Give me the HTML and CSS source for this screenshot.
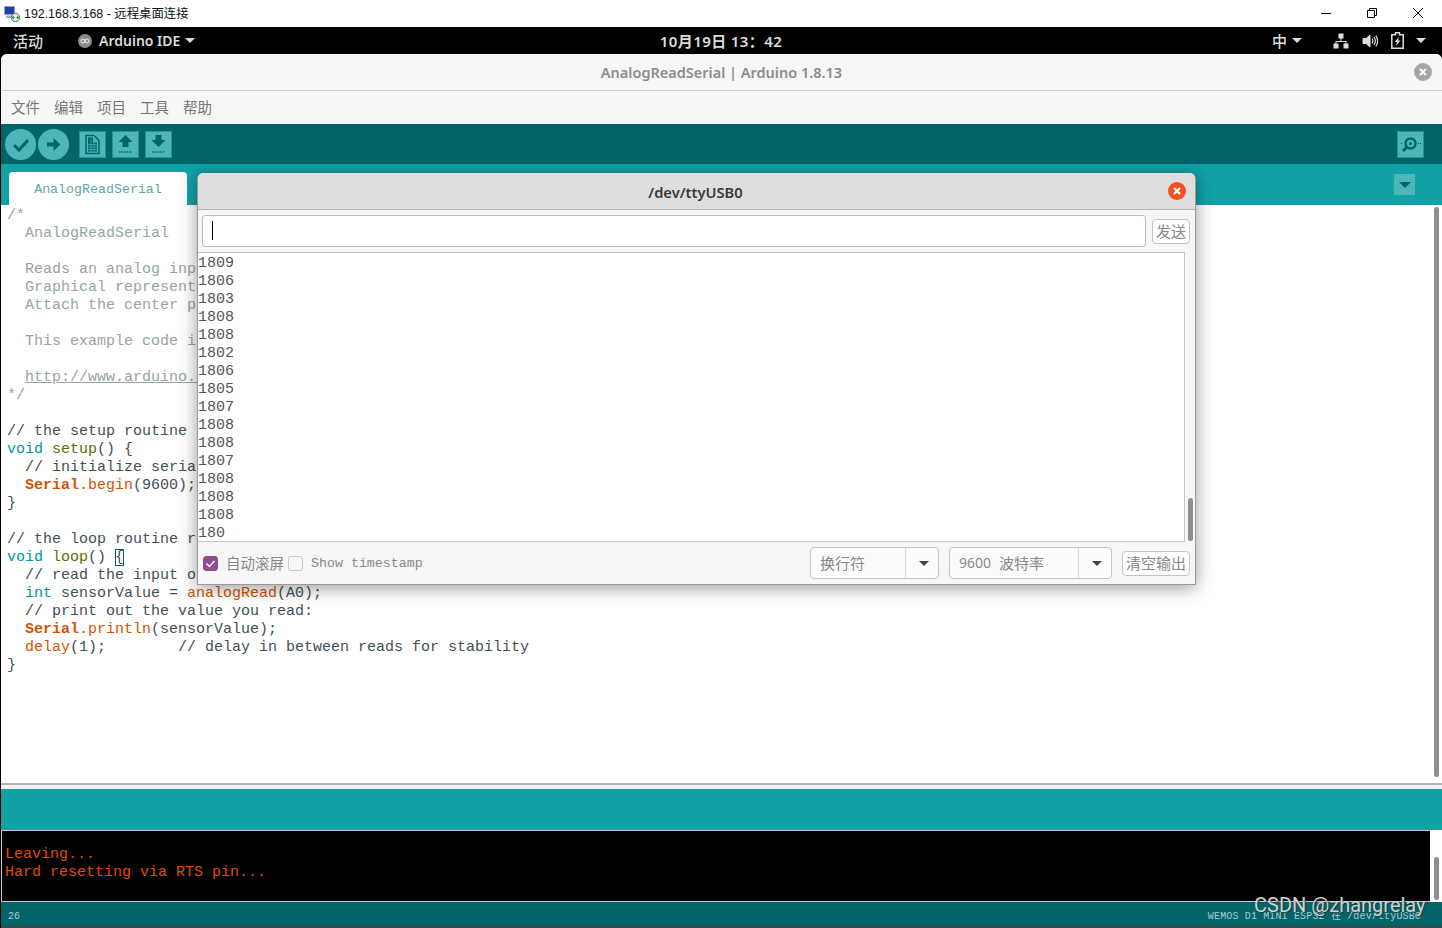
FILE: index.html
```html
<!DOCTYPE html>
<html lang="zh">
<head>
<meta charset="UTF-8">
<title>AnalogReadSerial | Arduino 1.8.13</title>
<link rel="stylesheet" href="styles.css">
</head>
<body>

<!-- windows remote desktop bar -->
<div class="rdp">
  <svg class="rdp-icon" width="16" height="16" viewBox="0 0 16 16">
    <rect x="0.500" y="0.500" width="10" height="8" fill="#1c3fb0" stroke="#9aa3b5"/>
    <rect x="2" y="9.500" width="8" height="2.500" fill="#a8aebb"/>
    <circle cx="11.500" cy="11.500" r="4.200" fill="#ececec" stroke="#666"/>
    <path d="M8.500 11.500h2M12.500 11.500h2M9.500 10l-1 1.500 1 1.500M13.500 10l1 1.500-1 1.500" stroke="#1d8a2a" fill="none"/>
  </svg>
  <span class="rdp-title">192.168.3.168 - 远程桌面连接</span>
  <div class="rdp-btns">
    <svg width="12" height="12" viewBox="0 0 12 12"><path d="M1 6.500h10" stroke="#000"/></svg>
    <svg width="12" height="12" viewBox="0 0 12 12"><path d="M1.500 3.500h7v7h-7zM3.500 3.500v-2h7v7h-2" stroke="#000" fill="none"/></svg>
    <svg width="12" height="12" viewBox="0 0 12 12"><path d="M1 1l10 10M11 1L1 11" stroke="#000"/></svg>
  </div>
</div>

<!-- gnome top bar -->
<div class="topbar">
  <div class="top-left">
    <span class="activities">活动</span>
    <span class="app">
      <svg width="14" height="14" viewBox="0 0 14 14"><circle cx="7" cy="7" r="7" fill="#8b8b8b"/><circle cx="5" cy="7" r="2" fill="none" stroke="#eee"/><circle cx="9" cy="7" r="2" fill="none" stroke="#eee"/></svg>
      Arduino IDE <i class="caret"></i>
    </span>
  </div>
  <div class="clock">10月19日 13：42</div>
  <div class="top-right">
    <span class="ime">中 <i class="caret"></i></span>
    <svg width="16" height="16" viewBox="0 0 16 16" fill="#ddd"><rect x="5.500" y="0.500" width="5" height="5"/><rect x="0.500" y="10.500" width="5" height="5"/><rect x="10.500" y="10.500" width="5" height="5"/><path d="M7.500 5h1v3h5v3h-1V9h-9v2h-1V8h5z"/></svg>
    <svg width="16" height="16" viewBox="0 0 16 16" fill="none" stroke="#ddd"><path d="M1 5.500h3L8 2v12L4 10.500H1z" fill="#ddd"/><path d="M10 5.500c1 1.500 1 3.500 0 5M12 4c1.700 2.500 1.700 5.500 0 8M13.800 2.500c2.300 3.500 2.300 7.500 0 11" stroke-width="1.200"/></svg>
    <svg width="13" height="17" viewBox="0 0 13 17"><path d="M4.500 0.800h4v2h3.700v13.400H.8V2.800h3.700z" fill="none" stroke="#ddd" stroke-width="1.500"/><path d="M8 5L3.500 10H6l-1 4 4.500-5.500H7z" fill="#ddd"/></svg>
    <i class="caret"></i>
  </div>
</div>

<!-- arduino window -->
<div class="ide">
  <div class="ide-title">
    <span>AnalogReadSerial | Arduino 1.8.13</span>
    <span class="win-close">
      <svg width="18" height="18" viewBox="0 0 18 18"><circle cx="9" cy="9" r="9" fill="#a5a5a5"/><path d="M6 6l6 6M12 6l-6 6" stroke="#fff" stroke-width="2.200"/></svg>
    </span>
  </div>

  <div class="menu">
    <span>文件</span><span>编辑</span><span>项目</span><span>工具</span><span>帮助</span>
  </div>

  <div class="toolbar">
    <span class="round"><svg width="31" height="31" viewBox="0 0 31 31"><path d="M9 16l5 5 9-10" fill="none" stroke="#00646a" stroke-width="3"/></svg></span>
    <span class="round"><svg width="31" height="31" viewBox="0 0 31 31"><path d="M9 13.500h6.500V9l7 6.500-7 6.500v-4.500H9z" fill="#00646a"/></svg></span>
    <span class="square first"><svg width="25" height="25" viewBox="0 0 25 25"><path d="M6 3.500h8l5 5v13H6z" fill="none" stroke="#00646a" stroke-width="1.500"/><path d="M8 5.500h5v5h4v9H8z" fill="#00646a"/><path d="M8 12.500h9M8 15h9M8 17.500h9M11 7v12M14 10v9" stroke="#4db6bb" stroke-width=".7"/></svg></span>
    <span class="square"><svg width="25" height="25" viewBox="0 0 25 25"><path d="M12.500 3l7 7h-4v5h-6v-5h-4z" fill="#00646a"/><path d="M6 20h13" stroke="#00646a" stroke-width="1.500" stroke-dasharray="1.500 1"/></svg></span>
    <span class="square"><svg width="25" height="25" viewBox="0 0 25 25"><path d="M9.500 3h6v5h4l-7 7-7-7h4z" fill="#00646a"/><path d="M6 20h13" stroke="#00646a" stroke-width="1.500" stroke-dasharray="1.500 1"/></svg></span>
    <span class="square monitor-btn"><svg width="25" height="25" viewBox="0 0 25 25"><circle cx="12.500" cy="11.500" r="5" fill="none" stroke="#00646a" stroke-width="2.500"/><circle cx="12.500" cy="11.500" r="1.500" fill="#00646a"/><path d="M9 15l-4 4" stroke="#00646a" stroke-width="3"/><path d="M3 11.500h2M20 11.500h3" stroke="#00646a" stroke-dasharray="1 1"/></svg></span>
  </div>

  <div class="tabs">
    <span class="tab">AnalogReadSerial</span>
    <span class="tab-menu"><i></i></span>
  </div>

  <div class="editor">
<pre class="code"><span class="c">/*
  AnalogReadSerial

  Reads an analog input on pin 0, prints the result to the Serial Monitor.
  Graphical representation is available using Serial Plotter.
  Attach the center pin of a potentiometer to pin A0.

  This example code is in the public domain.

  <u>http://www.arduino.cc/en/Tutorial/AnalogReadSerial</u>
*/</span>

// the setup routine runs once when you press reset:
<span class="k">void</span> <span class="f">setup</span>() {
  // initialize serial communication at 9600 bits per second:
  <span class="s">Serial</span><span class="o">.begin</span>(9600);
}

// the loop routine runs over and over again forever:
<span class="k">void</span> <span class="f">loop</span>() <span class="match">{</span>
  // read the input on analog pin 0:
  <span class="k">int</span> sensorValue = <span class="o">analogRead</span>(A0);
  // print out the value you read:
  <span class="s">Serial</span><span class="o">.println</span>(sensorValue);
  <span class="o">delay</span>(1);        // delay in between reads for stability
}</pre>
    <span class="vbar"></span>
  </div>

  <div class="divider"></div>
  <div class="notice"></div>

  <div class="console">
    <pre class="console-text">Leaving...
Hard resetting via RTS pin...</pre>
    <div class="console-side"><span></span></div>
  </div>

  <div class="status">
    <span class="lineno">26</span>
    <span class="board">WEMOS D1 MINI ESP32 在 /dev/ttyUSB0</span>
  </div>
</div>

<!-- serial monitor, floats over the ide window -->
<div class="monitor">
  <div class="mon-title">
    <span>/dev/ttyUSB0</span>
    <svg class="mon-close" width="18" height="18" viewBox="0 0 18 18"><circle cx="9" cy="9" r="9" fill="#f4511e"/><path d="M6 6l6 6M12 6l-6 6" stroke="#fff" stroke-width="2.200"/></svg>
  </div>
  <div class="mon-send">
    <div class="mon-input"><i></i></div>
    <span class="btn">发送</span>
  </div>
  <div class="mon-body">
<pre class="mon-out">1809
1806
1803
1808
1808
1802
1806
1805
1807
1808
1808
1807
1808
1808
1808
180</pre>
    <span class="mon-bar"></span>
  </div>
  <div class="mon-foot">
    <span class="check on"><svg width="15" height="15" viewBox="0 0 15 15"><path d="M3.500 7.500l3 3 5-5.500" fill="none" stroke="#fff" stroke-width="1.500"/></svg></span>
    <span class="scroll-label">自动滚屏</span>
    <span class="check"></span>
    <span class="stamp">Show timestamp</span>
    <span class="select first-sel"><span class="sel-text">换行符</span><span class="sel-arrow"><i></i></span></span>
    <span class="select baud"><span class="sel-text"><small>9600</small> 波特率</span><span class="sel-arrow"><i></i></span></span>
    <span class="btn clear">清空输出</span>
  </div>
</div>

<div class="watermark">CSDN @zhangrelay</div>

</body>
</html>
```

FILE: styles.css
```css
*{
    box-sizing: border-box;
}
html, body{
    margin: 0;
    height: 100%;
}
body{
    width: 1442px;
    height: 928px;
    overflow: hidden;
    display: flex;
    flex-direction: column;
    background: #000;
    font-family: "Noto Sans", "Noto Sans CJK SC", sans-serif;
}
pre{
    margin: 0;
}

/* remote desktop bar */
.rdp{
    height: 27px;
    flex: none;
    background: #fff;
    display: flex;
    align-items: center;
    padding-left: 4px;
    color: #111;
    font-family: "Liberation Sans", "Noto Sans CJK SC", sans-serif;
    font-size: 12.400px;
}
.rdp-icon{
    margin-right: 4px;
}
.rdp-title{
    margin-top: -1px;
}
.rdp-btns{
    margin-left: auto;
    display: flex;
    gap: 34px;
    padding-right: 18px;
    margin-top: -2px;
}

/* top bar */
.topbar{
    height: 27px;
    flex: none;
    display: grid;
    grid-template-columns: 1fr auto 1fr;
    align-items: center;
    background: #000;
    color: #ddd;
    font-size: 15px;
    font-weight: 600;
}
.top-left{
    display: flex;
    align-items: center;
    padding-left: 13px;
}
.activities{
    margin-right: 35px;
    font-weight: 500;
}
.app{
    display: flex;
    align-items: center;
    gap: 7px;
    font-size: 14px;
}
.app .caret{
    margin-left: -2px;
}
.clock{
    font-size: 15px;
    letter-spacing: 0.400px;
}
.top-right{
    display: flex;
    align-items: center;
    justify-content: flex-end;
    gap: 13px;
    padding-right: 16px;
}
.ime{
    display: flex;
    align-items: center;
    gap: 5px;
    margin-right: 18px;
    font-weight: 500;
}
.top-right > svg:nth-of-type(3){
    margin-right: -1px;
}
.caret{
    display: inline-block;
    width: 0;
    height: 0;
    border: 5px solid transparent;
    border-top-color: #ddd;
    border-bottom: 0;
}

/* ide window */
.ide{
    flex: 1;
    min-height: 0;
    display: flex;
    flex-direction: column;
    margin-left: 1px;
    background: #fff;
    border-radius: 6px 6px 0 0;
    overflow: hidden;
}
.ide-title{
    height: 37px;
    flex: none;
    position: relative;
    display: flex;
    align-items: center;
    justify-content: center;
    background: #f6f6f6;
    border-bottom: 1px solid #cfcfcf;
    color: #8c8c8c;
    font-size: 14.500px;
    font-weight: 600;
}
.win-close{
    position: absolute;
    right: 10px;
    top: 9px;
    height: 18px;
}
.menu{
    height: 33px;
    flex: none;
    display: flex;
    align-items: center;
    gap: 14px;
    padding: 0 0 2px 10px;
    background: #f6f6f6;
    color: #777;
    font-size: 14.500px;
}
.toolbar{
    height: 40px;
    flex: none;
    display: flex;
    align-items: center;
    padding-left: 4px;
    background: #00646a;
}
.round{
    width: 31px;
    height: 31px;
    margin-right: 2px;
    border-radius: 50%;
    background: #4db6bb;
}
.square{
    width: 27px;
    height: 27px;
    margin-right: 6px;
    padding: 1px;
    background: #4db6bb;
    border: 1px solid #2b9197;
}
.square svg{
    display: block;
    margin: -1px;
}
.first{
    margin-left: 8px;
}
.monitor-btn{
    margin-left: auto;
    margin-right: 18px;
}
.tabs{
    height: 41px;
    flex: none;
    display: flex;
    align-items: flex-end;
    padding-left: 8px;
    background: #12a2a6;
}
.tab{
    width: 178px;
    height: 33px;
    padding-top: 10px;
    text-align: center;
    background: #fff;
    border-radius: 4px 4px 0 0;
    color: #5fa5a7;
    font-family: "Liberation Mono", monospace;
    font-size: 13.300px;
}
.tab-menu{
    margin-left: auto;
    margin-right: 27px;
    margin-bottom: 10px;
    width: 21px;
    height: 21px;
    display: flex;
    align-items: center;
    justify-content: center;
    background: #4db6bb;
}
.tab-menu i{
    border: 6px solid transparent;
    border-top-color: #00646a;
    border-bottom: 0;
}

/* editor */
.editor{
    flex: 1;
    min-height: 0;
    position: relative;
    overflow: hidden;
    background: #fff;
}
.code, .mon-out, .console-text{
    font-family: "Liberation Mono", monospace;
    font-size: 15px;
    line-height: 18px;
}
.code{
    padding: 2px 0 0 6px;
    color: #434f54;
}
.c{ color: #95a5a6; }
.k{ color: #00979c; }
.f{ color: #5e6d03; }
.s{ color: #d35400; font-weight: bold; }
.o{ color: #d35400; }
.match{
    outline: 1px solid #006468;
    outline-offset: -1px;
}
.vbar{
    position: absolute;
    right: 3px;
    top: 2px;
    bottom: 6px;
    width: 5px;
    border-radius: 3px;
    background: #8f8f8f;
}
.divider{
    height: 6px;
    flex: none;
    background: #f1f1f1;
    border-top: 2px solid #b0b0b0;
}
.notice{
    height: 41px;
    flex: none;
    background: #12a2a6;
}
.console{
    height: 72px;
    flex: none;
    display: flex;
    background: #fff;
}
.console-text{
    flex: 1;
    padding: 15px 0 0 3px;
    background: #000;
    border: 1px solid #ccc;
    border-right: 0;
    color: #e34c00;
}
.console-side{
    width: 12px;
    padding: 27px 3px 2px 4px;
}
.console-side span{
    display: block;
    height: 43px;
    border-radius: 3px;
    background: #8f8f8f;
}
.status{
    height: 26px;
    flex: none;
    display: flex;
    align-items: center;
    justify-content: space-between;
    padding: 2px 21px 0 7px;
    background: #006468;
    color: #a9cfd0;
    font-family: "Liberation Mono", "Noto Sans CJK SC", monospace;
    font-size: 10px;
    border-bottom: 2px solid #444;
}
.lineno{
    margin-top: 2px;
}
.board{
    margin-top: -2px;
    letter-spacing: 0.150px;
}

/* serial monitor */
.monitor{
    position: absolute;
    left: 197px;
    top: 173px;
    width: 999px;
    height: 412px;
    display: flex;
    flex-direction: column;
    background: #f6f6f6;
    border: 1px solid #9a9a9a;
    border-top: 0;
    border-radius: 6px 6px 0 0;
    box-shadow: 0 3px 18px rgba(0,0,0,0.4);
}
.mon-title{
    height: 37px;
    flex: none;
    display: flex;
    align-items: center;
    justify-content: center;
    position: relative;
    padding: 2px 2px 0 0;
    background: #dedede;
    border-bottom: 1px solid #b5b5b5;
    border-radius: 6px 6px 0 0;
    color: #3a3a3a;
    font-size: 14.700px;
    font-weight: 600;
}
.mon-close{
    position: absolute;
    right: 9px;
    top: 9px;
}
.mon-send{
    height: 42px;
    flex: none;
    display: flex;
    align-items: center;
    padding: 0 5px 0 4px;
}
.mon-input{
    width: 944px;
    height: 32px;
    padding: 5px 9px;
    background: #fff;
    border: 1px solid #bcbcbc;
    border-radius: 3px;
}
.mon-input i{
    display: block;
    width: 1px;
    height: 19px;
    background: #000;
}
.btn{
    display: inline-flex;
    align-items: center;
    justify-content: center;
    padding-bottom: 2px;
    border: 1px solid #c4c4c4;
    border-radius: 4px;
    background: #fff;
    color: #888;
    font-size: 15px;
}
.mon-send .btn{
    width: 38px;
    height: 25px;
    margin-left: auto;
}
.mon-body{
    height: 290px;
    flex: none;
    position: relative;
    background: #f6f6f6;
}
.mon-out{
    width: 987px;
    height: 290px;
    overflow: hidden;
    padding-top: 2px;
    background: #fff;
    border: 1px solid #c4c4c4;
    border-left: 0;
    color: #555;
}
.mon-bar{
    position: absolute;
    right: 2px;
    bottom: 1px;
    width: 5px;
    height: 43px;
    border-radius: 3px;
    background: #8f8f8f;
}
.mon-foot{
    flex: 1;
    display: flex;
    align-items: center;
    padding: 0 5px;
    color: #888;
}
.check{
    width: 15px;
    height: 15px;
    flex: none;
    border: 1px solid #c8c8c8;
    border-radius: 3px;
    background: #f6f6f6;
}
.check.on{
    background: #924d8b;
    border-color: #924d8b;
}
.check svg{
    display: block;
    margin: -1px;
}
.scroll-label{
    margin: -2px 4px 0 8px;
    font-size: 14.500px;
}
.stamp{
    margin: 1px 0 0 8px;
    font-family: "Liberation Mono", monospace;
    font-size: 13.300px;
}
.select{
    height: 32px;
    display: flex;
    border: 1px solid #c4c4c4;
    border-radius: 4px;
    background: #fbfbfb;
    font-size: 15px;
}
.first-sel{
    width: 129px;
    margin-left: auto;
}
.baud{
    width: 163px;
    margin-left: 10px;
}
.sel-text{
    flex: 1;
    display: flex;
    align-items: center;
    gap: 8px;
    padding: 0 0 2px 9px;
}
.sel-text small{
    font-size: 14px;
}
.sel-arrow{
    width: 33px;
    display: flex;
    align-items: center;
    justify-content: center;
    padding-left: 4px;
    border-left: 1px solid #d6d6d6;
}
.sel-arrow i{
    border: 5px solid transparent;
    border-top-color: #444;
    border-bottom: 0;
}
.btn.clear{
    width: 68px;
    height: 25px;
    margin-left: 10px;
}

.watermark{
    position: absolute;
    left: 1254px;
    top: 893px;
    color: #c9d3d3;
    font-family: "Roboto", sans-serif;
    font-size: 20px;
    white-space: nowrap;
    text-shadow: 1px 1px 1px #333;
}
```
